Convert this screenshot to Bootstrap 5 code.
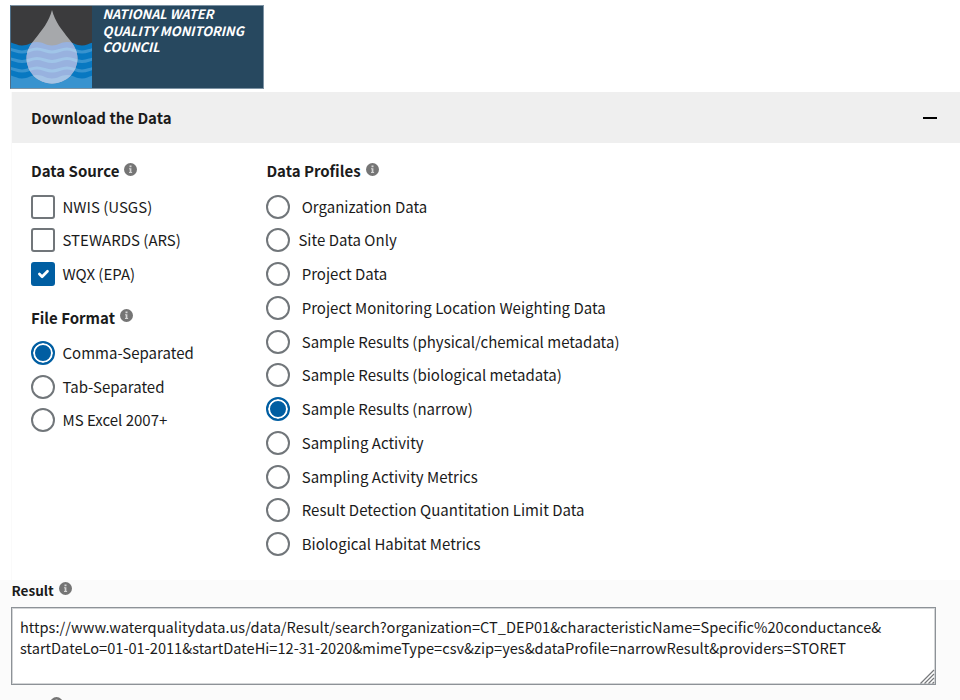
<!DOCTYPE html>
<html lang="en">
<head>
<meta charset="utf-8">
<meta name="viewport" content="width=device-width, initial-scale=1">
<title>Download the Data</title>
<link href="https://cdn.jsdelivr.net/npm/bootstrap@5.3.0/dist/css/bootstrap.min.css" rel="stylesheet">
<style>
body{font-family:"Noto Sans CJK SC","Noto Sans",sans-serif;font-size:15px;color:#1b1b1b;height:700px;overflow:hidden;background:#fff}
.brand{margin:5px 0 0 10px;width:254px;height:84px;background:#27485f;border:1px solid #7d93a4;border-left-color:#4f6f88}
.brand-title{font-size:12.85px;line-height:16.5px;font-weight:700;font-style:italic;padding:0 0 0 10.500px}
.panel{margin-left:11px;border-left:1px solid #fafafa;height:488px}
.panel-head{height:51px;margin-top:3px;background:#efefef;padding:0 23px 0 19px;font-weight:700}
.panel-head .head-text{padding-top:2px}
.minus{width:14px;height:2px;background:#000}
.group-title{font-weight:700;line-height:20px;height:20px;gap:5px}
.group-title svg{margin-top:-4px}
.options{padding-top:8.7px}
.opt{height:33.75px;gap:7.5px;line-height:20px}
.opt .form-check-input{width:24px;height:24px;margin:0;border:2px solid #71767a;background-color:#fff;flex:none}
.opt .form-check-input[type=checkbox]{border-radius:3px}
.opt .form-check-input[type=checkbox]:checked{background-color:#005ea2;border-color:#005ea2;background-size:18px}
.opt .form-check-input[type=radio]:checked{background-image:none;background-color:#005ea2;border-color:#005ea2;box-shadow:inset 0 0 0 2px #fff}
.profiles .opt{gap:11.3px;letter-spacing:.015px}
.profiles .opt.tight{gap:8px}
.col-source{width:235.4px}
.panel-body{padding:18px 0 0 19px}
.result{background:#fbfbfb;height:120px;padding-left:11.4px}
.result .group-title{font-size:13.6px}
.result .group-title svg{margin-top:-3px}
.query{width:925px;height:78px;margin:7px 0 0 -.4px}
.query textarea{width:100%;height:100%;border:1px solid #8d9297;outline:1px solid #d3d5d7;outline-offset:-2px;border-radius:0;padding:8px;font-size:14.62px;line-height:21px;color:#1b1b1b;resize:none;overflow:hidden;background:#fff}
.grip{right:1px;bottom:1px}
.file-format{margin-top:17px}
.file-format + .options{padding-top:8px}
.next-info{margin:12px 0 0 38.5px}
</style>
</head>
<body>
<svg class="d-none"><symbol id="info" viewBox="0 0 13 13"><circle cx="6.5" cy="6.5" r="6.5" fill="#757575"/><path d="M5.5 2.5h2v1.7h-2zM5 5.2h2.4v3.9h.7v1H5v-1h.7V6.2H5z" fill="#d5d5d5"/></symbol></svg>

<div class="brand d-flex">
  <svg width="81" height="82" viewBox="0 0 81 82" class="flex-shrink-0">
    <defs>
      <path id="water" d="M-4 36c6 0 9 3.500 15 3.500s9-3.500 15-3.500 9 3.500 15 3.500 9-3.500 15-3.500 9 3.500 15 3.500 9-3.500 15-3.500v50H-4z"/>
      <path id="wave" fill="none" stroke-width="3" d="M-4 43c6 0 9 3 15 3s9-3 15-3 9 3 15 3 9-3 15-3 9 3 15 3 9-3 15-3"/>
      <path id="drop" d="M41 4C44 16 51 24 58 33c5 6 8.500 12 8.500 19.500a25.500 25 0 0 1-51 0C15.500 45 19 39 24 33 31 24 38 16 41 4z"/>
      <clipPath id="dropClip"><use href="#drop"/></clipPath>
    </defs>
    <path fill="#3b3b3d" d="M0 0h81v82H0z"/>
    <use href="#water" fill="#0878c1"/>
    <use href="#water" y="33" fill="#3893cf"/>
    <g stroke="#3893cf"><use href="#wave"/><use href="#wave" y="9.500"/><use href="#wave" y="19"/></g>
    <use href="#drop" fill="#a6a8ab"/>
    <g clip-path="url(#dropClip)">
      <use href="#water" fill="#98b2df"/>
      <use href="#water" y="33" fill="#a5c4e6"/>
      <g stroke="#a0c5e8"><use href="#wave"/><use href="#wave" y="9.500"/><use href="#wave" y="19"/></g>
    </g>
  </svg>
  <div class="brand-title text-white text-nowrap">NATIONAL WATER<br>QUALITY MONITORING<br>COUNCIL</div>
</div>

<main>
<section class="panel">
  <div class="panel-head d-flex align-items-center justify-content-between"><span class="head-text">Download the Data</span><span class="minus"></span></div>
  <div class="panel-body d-flex">
    <div class="col-source">
      <div class="group-title d-flex align-items-center">Data Source<svg width="13" height="13"><use href="#info"/></svg></div>
      <div class="options">
        <label class="opt d-flex align-items-center"><input class="form-check-input" type="checkbox">NWIS (USGS)</label>
        <label class="opt d-flex align-items-center"><input class="form-check-input" type="checkbox">STEWARDS (ARS)</label>
        <label class="opt d-flex align-items-center"><input class="form-check-input" type="checkbox" checked>WQX (EPA)</label>
      </div>
      <div class="group-title file-format d-flex align-items-center">File Format<svg width="13" height="13"><use href="#info"/></svg></div>
      <div class="options">
        <label class="opt d-flex align-items-center"><input class="form-check-input" type="radio" name="format" checked>Comma-Separated</label>
        <label class="opt d-flex align-items-center"><input class="form-check-input" type="radio" name="format">Tab-Separated</label>
        <label class="opt d-flex align-items-center"><input class="form-check-input" type="radio" name="format">MS Excel 2007+</label>
      </div>
    </div>
    <div class="profiles">
      <div class="group-title d-flex align-items-center">Data Profiles<svg width="13" height="13"><use href="#info"/></svg></div>
      <div class="options text-nowrap">
        <label class="opt d-flex align-items-center"><input class="form-check-input" type="radio" name="profile">Organization Data</label>
        <label class="opt tight d-flex align-items-center"><input class="form-check-input" type="radio" name="profile">Site Data Only</label>
        <label class="opt d-flex align-items-center"><input class="form-check-input" type="radio" name="profile">Project Data</label>
        <label class="opt d-flex align-items-center"><input class="form-check-input" type="radio" name="profile">Project Monitoring Location Weighting Data</label>
        <label class="opt d-flex align-items-center"><input class="form-check-input" type="radio" name="profile">Sample Results (physical/chemical metadata)</label>
        <label class="opt d-flex align-items-center"><input class="form-check-input" type="radio" name="profile">Sample Results (biological metadata)</label>
        <label class="opt d-flex align-items-center"><input class="form-check-input" type="radio" name="profile" checked>Sample Results (narrow)</label>
        <label class="opt d-flex align-items-center"><input class="form-check-input" type="radio" name="profile">Sampling Activity</label>
        <label class="opt d-flex align-items-center"><input class="form-check-input" type="radio" name="profile">Sampling Activity Metrics</label>
        <label class="opt d-flex align-items-center"><input class="form-check-input" type="radio" name="profile">Result Detection Quantitation Limit Data</label>
        <label class="opt d-flex align-items-center"><input class="form-check-input" type="radio" name="profile">Biological Habitat Metrics</label>
      </div>
    </div>
  </div>
</section>
<section class="result">
  <div class="group-title d-flex align-items-center">Result<svg width="13" height="13"><use href="#info"/></svg></div>
  <div class="query position-relative">
    <textarea class="form-control" spellcheck="false" aria-label="Result">https://www.waterqualitydata.us/data/Result/search?organization=CT_DEP01&amp;characteristicName=Specific%20conductance&amp;
startDateLo=01-01-2011&amp;startDateHi=12-31-2020&amp;mimeType=csv&amp;zip=yes&amp;dataProfile=narrowResult&amp;providers=STORET</textarea>
    <svg class="grip position-absolute" width="15" height="15" viewBox="0 0 15 15"><path d="M.5 14.500L14 1M4.500 14.500L14 5M8.500 14.500L14 9M12.500 14.500L14 13" stroke="#77797c" stroke-width="1.200" fill="none"/></svg>
  </div>
  <svg class="d-block next-info" width="13" height="13"><use href="#info"/></svg>
</section>
</main>
<script src="https://cdn.jsdelivr.net/npm/bootstrap@5.3.0/dist/js/bootstrap.bundle.min.js"></script>
</body>
</html>
